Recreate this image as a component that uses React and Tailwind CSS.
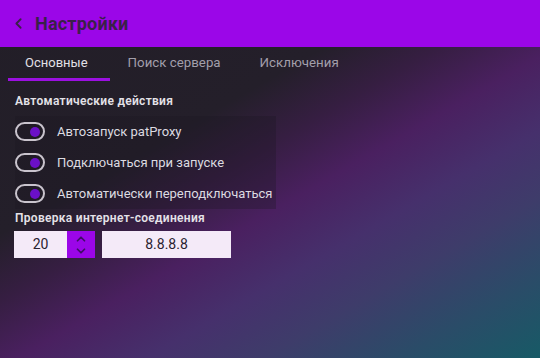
import { ChevronLeft, ChevronUp, ChevronDown } from 'lucide-react'

const toggles = ['Автозапуск patProxy', 'Подключаться при запуске', 'Автоматически переподключаться']

function Toggle() {
  return (
    <div className="w-[30px] h-[19px] rounded-full border-2 border-[#c9c4cd] flex items-center justify-end pr-[3px]">
      <div className="w-[10px] h-[10px] rounded-full bg-[#6b10c8]" />
    </div>
  )
}

export default function App() {
  return (
    <div className="w-[540px] h-[358px] overflow-hidden font-['Roboto',sans-serif] bg-[linear-gradient(150deg,#221e27_0%,#241f2a_35%,#361e42_45%,#4a2060_55%,#46306c_66%,#3e3c6a_76%,#2a4c68_88%,#175a66_100%)]">
      <header className="h-[47px] bg-[#9b06e8] flex items-center pl-[10px] gap-[8px]">
        <ChevronLeft size={17} strokeWidth={2.6} className="text-[#3a2048]" />
        <h1 className="text-[18px] font-bold text-[#3a2048] tracking-[0.2px]">Настройки</h1>
      </header>

      <nav className="flex h-[34px] pl-[8px]">
        <button className="pl-[17px] pr-[22px] text-[13px] text-[#e2e0e6] border-b-[3px] border-[#9b10e0] pt-[1px]">Основные</button>
        <button className="pl-[18px] pr-[20px] text-[13.3px] text-[#a29eaa] border-b-[3px] border-transparent pt-[1px]">Поиск сервера</button>
        <button className="pl-[19px] pr-[19px] text-[13.3px] text-[#a29eaa] border-b-[3px] border-transparent pt-[1px]">Исключения</button>
      </nav>

      <main className="px-[15px] pt-[12px]">
        <h2 className="text-[12px] leading-[16px] font-semibold text-[#e4e2e8] tracking-[0.3px]">Автоматические действия</h2>
        <div className="w-fit pr-[4px] mt-[7px] bg-[#1c1820]/30">
          {toggles.map((t) => (
            <div key={t} className="h-[31px] flex items-center gap-[12px]">
              <Toggle />
              <span className="text-[13px] text-[#dcdae0]">{t}</span>
            </div>
          ))}
        </div>

        <h2 className="mt-[1px] text-[12px] leading-[16px] font-semibold text-[#e4e2e8] tracking-[0.3px]">Проверка интернет-соединения</h2>
        <div className="flex mt-[5px] -ml-px gap-[7px]">
          <div className="flex h-[27px]">
            <div className="w-[53px] bg-[#f4eaf8] flex items-center justify-center text-[14px] text-[#2a2230]">20</div>
            <div className="w-[28px] bg-[#9b06e8] flex flex-col items-center justify-center text-[#3e0e66]">
              <ChevronUp size={14} strokeWidth={3} className="-mb-[1px]" />
              <ChevronDown size={14} strokeWidth={3} className="-mt-[1px]" />
            </div>
          </div>
          <div className="w-[129px] h-[27px] bg-[#f4eaf8] flex items-center justify-center text-[14px] text-[#2a2230]">8.8.8.8</div>
        </div>
      </main>
    </div>
  )
}
